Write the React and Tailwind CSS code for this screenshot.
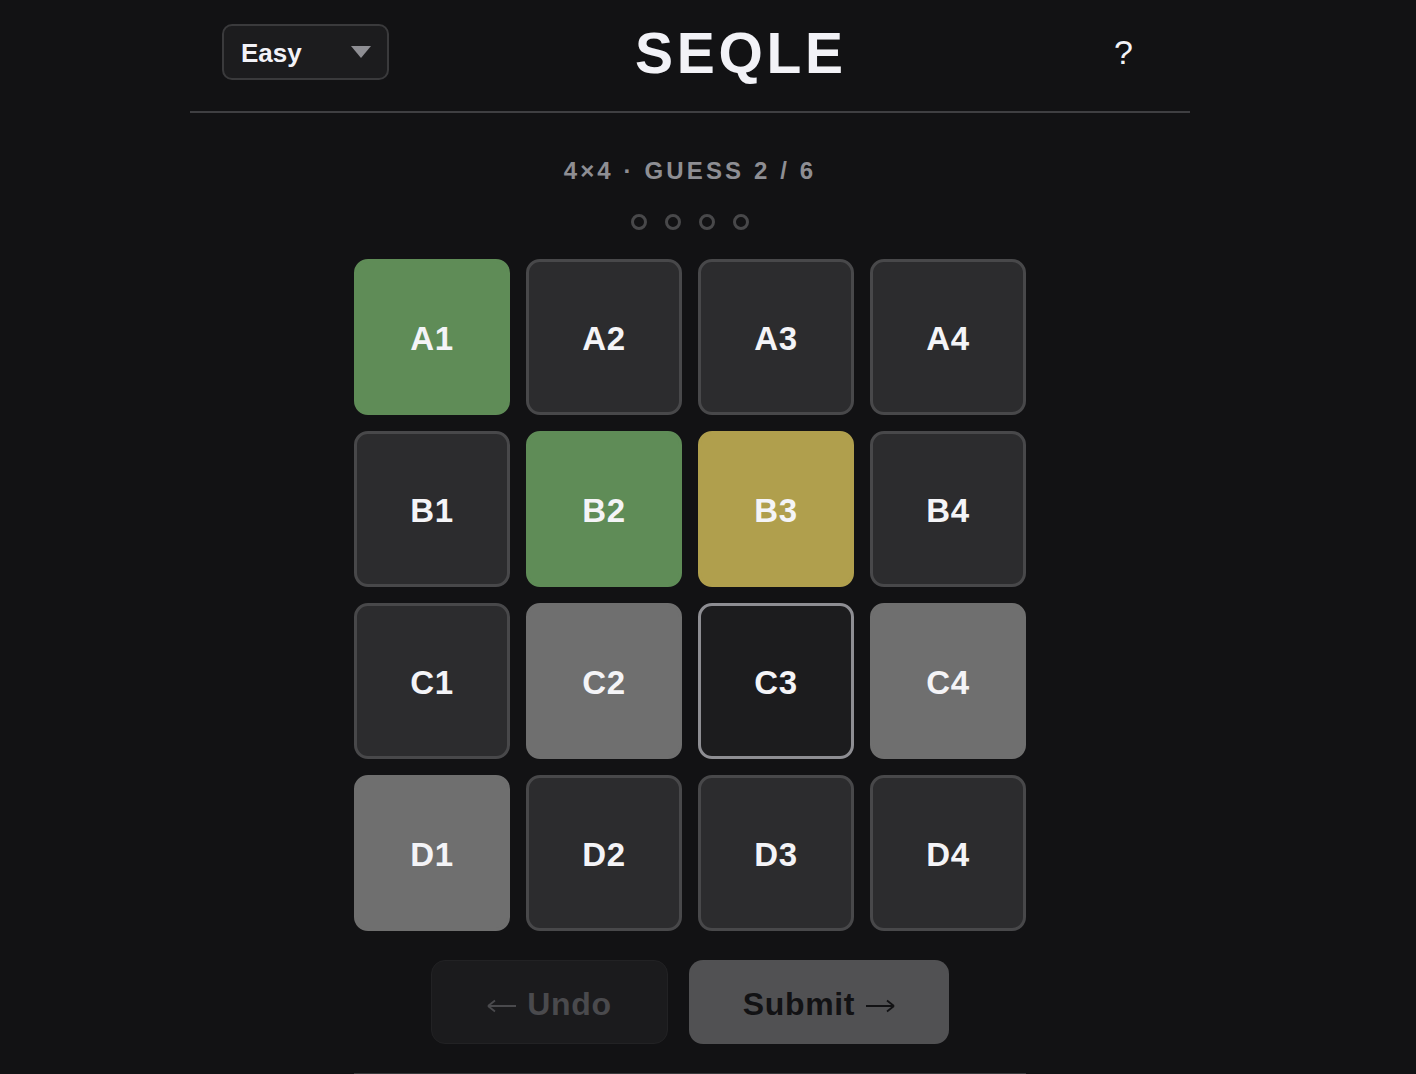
import React from "react";

const board = [
  ["A1", "green"], ["A2", "empty"], ["A3", "empty"], ["A4", "empty"],
  ["B1", "empty"], ["B2", "green"], ["B3", "yellow"], ["B4", "empty"],
  ["C1", "empty"], ["C2", "gray"], ["C3", "selected"], ["C4", "gray"],
  ["D1", "gray"], ["D2", "empty"], ["D3", "empty"], ["D4", "empty"],
];

const tileStyles = {
  green: "bg-[#5f8c57] border-[3px] border-[#5f8c57]",
  yellow: "bg-[#b09f4d] border-[3px] border-[#b09f4d]",
  gray: "bg-[#6f6f6f] border-[3px] border-[#6f6f6f]",
  empty: "bg-[#2c2c2e] border-[3px] border-[#48484a]",
  selected: "bg-[#1c1c1e] border-[3px] border-[#8e8e93]",
};

// thin long arrow used on the undo / submit buttons
function Arrow({ dir }) {
  return (
    <svg width="30" height="14" viewBox="0 0 30 14" className={dir === "left" ? "mt-[4px]" : "mt-[4px] rotate-180"}>
      <path d="M1 7H29M1 7L8 1.5M1 7L8 12.5" fill="none" stroke="currentColor" strokeWidth="1.8" />
    </svg>
  );
}

function Tile({ label, state }) {
  return (
    <div
      className={`w-[156px] h-[156px] rounded-[14px] flex items-center justify-center pt-[3px] text-[33px] font-bold text-[#f4f4f7] tracking-[0.02em] ${tileStyles[state]}`}
    >
      {label}
    </div>
  );
}

export default function App() {
  return (
    <div
      className="min-h-screen bg-[#121214] pr-[36px]"
      style={{ fontFamily: '"Liberation Sans", Arial, sans-serif' }}
    >
      <div className="w-[1000px] mx-auto">
        <header className="h-[113px] flex items-center px-[32px] pb-[8px] border-b-2 border-[#3f3f42]">
          <button className="w-[167px] h-[56px] rounded-[10px] border-2 border-[#3a3a3c] bg-[#1c1c1e] flex items-center justify-between pl-[17px] pr-[16px]">
            <span className="mt-[3px] text-[26px] font-bold text-[#f2f2f7]">Easy</span>
            <span className="w-0 h-0 border-l-[10px] border-r-[10px] border-t-[12px] border-l-transparent border-r-transparent border-t-[#8e8e93]" />
          </button>
          <h1 className="ml-[246px] mt-[4px] text-[57px] leading-none font-bold tracking-[0.065em] text-[#f2f2f7]">
            SEQLE
          </h1>
          <button className="ml-auto mr-[25px] text-[34px] leading-none text-[#f2f2f7]">?</button>
        </header>

        <main className="flex flex-col items-center pt-[44px]">
          <p className="text-[24px] leading-[28px] font-bold tracking-[0.13em] text-[#8e8e93]">
            4×4 · GUESS 2 / 6
          </p>

          <div className="mt-[29px] flex gap-[18px]">
            {[0, 1, 2, 3].map((i) => (
              <span key={i} className="w-[16px] h-[16px] rounded-full border-[3px] border-[#48484a]" />
            ))}
          </div>

          <div className="mt-[29px] grid grid-cols-4 gap-[16px]">
            {board.map(([label, state]) => (
              <Tile key={label} label={label} state={state} />
            ))}
          </div>

          <div className="mt-[29px] flex gap-[21px]">
            <button className="w-[237px] h-[84px] rounded-[14px] bg-[#1b1b1d] border border-[#222224] flex items-center justify-center gap-[10px] pt-[3px] text-[#4a4a4d]">
              <Arrow dir="left" />
              <span className="text-[32px] font-bold tracking-[0.02em]">Undo</span>
            </button>
            <button className="w-[260px] h-[84px] rounded-[14px] bg-[#515153] flex items-center justify-center gap-[10px] pt-[3px] text-[#121214]">
              <span className="text-[32px] font-bold tracking-[0.02em]">Submit</span>
              <Arrow dir="right" />
            </button>
          </div>

          <div className="mt-[29px] w-[672px] border-t-2 border-[#3a3a3c]" />
        </main>
      </div>
    </div>
  );
}
